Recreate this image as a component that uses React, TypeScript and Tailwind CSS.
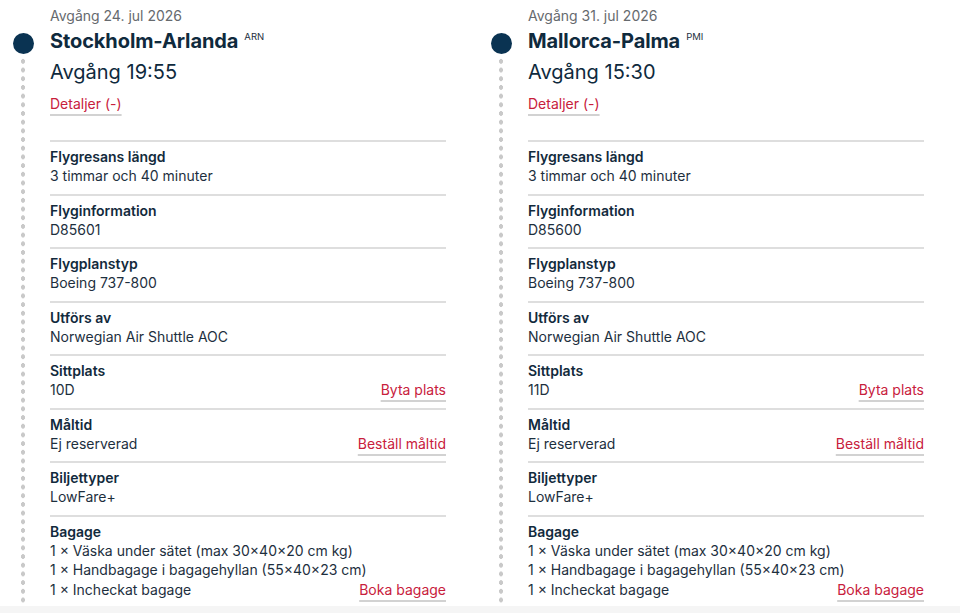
import React from 'react';

type Row = {
  label: string;
  lines: string[];
  action?: string;
};

type Leg = {
  date: string;
  airport: string;
  code: string;
  time: string;
  rows: Row[];
};

const legs: Leg[] = [
  {
    date: 'Avgång 24. jul 2026',
    airport: 'Stockholm-Arlanda',
    code: 'ARN',
    time: 'Avgång 19:55',
    rows: [
      { label: 'Flygresans längd', lines: ['3 timmar och 40 minuter'] },
      { label: 'Flyginformation', lines: ['D85601'] },
      { label: 'Flygplanstyp', lines: ['Boeing 737-800'] },
      { label: 'Utförs av', lines: ['Norwegian Air Shuttle AOC'] },
      { label: 'Sittplats', lines: ['10D'], action: 'Byta plats' },
      { label: 'Måltid', lines: ['Ej reserverad'], action: 'Beställ måltid' },
      { label: 'Biljettyper', lines: ['LowFare+'] },
      {
        label: 'Bagage',
        lines: [
          '1 × Väska under sätet (max 30×40×20 cm kg)',
          '1 × Handbagage i bagagehyllan (55×40×23 cm)',
          '1 × Incheckat bagage',
        ],
        action: 'Boka bagage',
      },
    ],
  },
  {
    date: 'Avgång 31. jul 2026',
    airport: 'Mallorca-Palma',
    code: 'PMI',
    time: 'Avgång 15:30',
    rows: [
      { label: 'Flygresans längd', lines: ['3 timmar och 40 minuter'] },
      { label: 'Flyginformation', lines: ['D85600'] },
      { label: 'Flygplanstyp', lines: ['Boeing 737-800'] },
      { label: 'Utförs av', lines: ['Norwegian Air Shuttle AOC'] },
      { label: 'Sittplats', lines: ['11D'], action: 'Byta plats' },
      { label: 'Måltid', lines: ['Ej reserverad'], action: 'Beställ måltid' },
      { label: 'Biljettyper', lines: ['LowFare+'] },
      {
        label: 'Bagage',
        lines: [
          '1 × Väska under sätet (max 30×40×20 cm kg)',
          '1 × Handbagage i bagagehyllan (55×40×23 cm)',
          '1 × Incheckat bagage',
        ],
        action: 'Boka bagage',
      },
    ],
  },
];

const linkClass =
  'text-[#c8203c] underline decoration-[#d2d2d2] decoration-[1.5px] underline-offset-[5px] [text-decoration-skip-ink:none] cursor-pointer';

const InfoRow: React.FC<{ row: Row }> = ({ row }) => (
  <div className="border-t-2 border-[#dedede] pt-[5px] pb-[8px]">
    <div className="font-semibold leading-[19px] text-[#122a3c]">{row.label}</div>
    {row.lines.map((line, i) => {
      const last = i === row.lines.length - 1;
      return (
        <div key={i} className="flex justify-between leading-[19.5px]">
          <span>{line}</span>
          {last && row.action && <span className={linkClass}>{row.action}</span>}
        </div>
      );
    })}
  </div>
);

const LegColumn: React.FC<{ leg: Leg }> = ({ leg }) => (
  <section className="flex w-[478px] shrink-0">
    {/* timeline rail */}
    <div className="w-[50px] shrink-0 flex flex-col items-center pt-[33px] pr-[4px]">
      <div className="w-[21px] h-[21px] rounded-full bg-[#0a3352]" />
      <div className="mt-[3px] w-[6px] flex-1 bg-[radial-gradient(circle,#c9c9c9_2px,transparent_2.5px)] bg-[length:6px_8.7px] bg-repeat-y" />
    </div>

    <div className="w-[396px] shrink-0 pt-[6px] text-[14px] text-[#1d2f3e]">
      <div className="leading-[20px] text-[#666a6e]">{leg.date}</div>
      <div className="mt-[1px] flex items-start leading-[28px]">
        <h2 className="text-[20px] font-bold text-[#0f2a3d] tracking-[-0.1px]">{leg.airport}</h2>
        <span className="ml-[6px] mt-[4px] text-[9.5px] leading-[12px] text-[#1d2f3e]">{leg.code}</span>
      </div>
      <div className="mt-[3px] text-[20px] leading-[28px] text-[#0f2a3d]">{leg.time}</div>
      <div className="mt-[8px] leading-[20px]">
        <span className={linkClass}>Detaljer (-)</span>
      </div>

      <div className="mt-[26px]">
        {leg.rows.map((row) => (
          <InfoRow key={row.label} row={row} />
        ))}
      </div>
    </div>
  </section>
);

export default function App() {
  return (
    <div className="min-h-screen bg-[#f5f5f5] font-['Inter',sans-serif]">
      <div className="bg-white h-[606px] flex overflow-hidden">
        {legs.map((leg) => (
          <LegColumn key={leg.code} leg={leg} />
        ))}
      </div>
    </div>
  );
}
